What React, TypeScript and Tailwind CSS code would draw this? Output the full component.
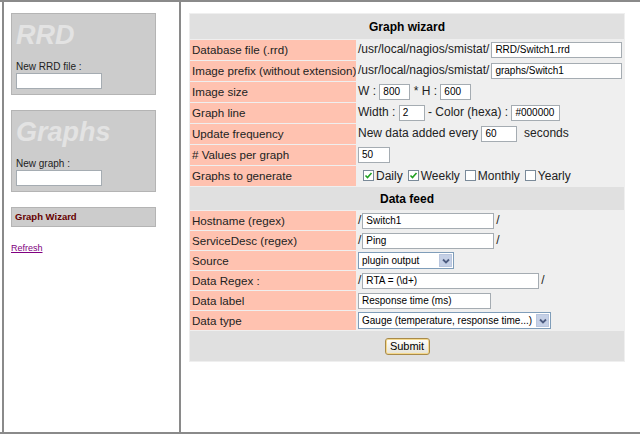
import React from "react";

const font = { fontFamily: '"Liberation Sans", Arial, sans-serif' };

function TextBox({ value = "", w, className = "" }: { value?: string; w: string; className?: string }) {
  return (
    <span
      className={`inline-flex h-[16px] items-center border border-[#a5acb2] bg-white px-[3px] align-middle text-[10px] leading-none text-black ${w} ${className}`}
    >
      {value}
    </span>
  );
}

function Select({ value, w }: { value: string; w: string }) {
  return (
    <span className={`inline-flex h-[17px] items-center border border-[#7f9db9] bg-white align-middle ${w}`}>
      <span className="flex-1 truncate pl-[3px] text-[10px] leading-none text-black">{value}</span>
      <span className="m-[1px] flex h-[13px] w-[13px] items-center justify-center border border-[#b9c6de] bg-[#c5d0e6]">
        <svg width="8" height="6" viewBox="0 0 8 6">
          <path d="M1 1.5 L4 4.5 L7 1.5" fill="none" stroke="#4d5c80" strokeWidth="1.8" />
        </svg>
      </span>
    </span>
  );
}

function Check({ checked, label }: { checked?: boolean; label: string }) {
  return (
    <span className="ml-[5px] inline-flex items-center">
      <span className="flex h-[11px] w-[11px] items-center justify-center border border-[#7a8a99] bg-white">
        {checked && (
          <svg width="9" height="9" viewBox="0 0 9 9">
            <path d="M1.5 4.5 L3.5 6.5 L7.5 2" fill="none" stroke="#21a121" strokeWidth="1.6" />
          </svg>
        )}
      </span>
      <span className="ml-[2px]">{label}</span>
    </span>
  );
}

function Row({ label, h = "h-[20px]", children }: { label: string; h?: string; children: React.ReactNode }) {
  return (
    <tr className={h}>
      <td className="overflow-hidden bg-[#ffc2b0] px-[2px] py-0 align-middle text-[11.6px] whitespace-nowrap">{label}</td>
      <td className="py-0 pl-[1px] pr-0 align-middle whitespace-nowrap">{children}</td>
    </tr>
  );
}

function SideBox({ title, label }: { title: string; label: string }) {
  return (
    <div className="h-[82px] w-[145px] border border-[#b4b4b4] bg-[#cccccc] pl-[4px]">
      <div className="mt-[5px] text-[27px] font-bold italic leading-[32px] text-[#e3e3e3]">{title}</div>
      <div className="mt-[10px] text-[10px] leading-[12px] text-[#222]">{label}</div>
      <div className="h-[16px] w-[86px] border border-[#a5acb2] bg-white" />
    </div>
  );
}

export default function App() {
  return (
    <div className="flex h-[435px] w-[640px] flex-col overflow-hidden bg-white text-black" style={font}>
      <div className="h-[2px] bg-[#8a8a8a]" />
      <div className="flex h-[430px]">
        <div className="ml-[2px] w-[177px] border-l-2 border-[#8a8a8a] pl-[7px] pt-[11px]">
          <SideBox title="RRD" label="New RRD file :" />
          <div className="mt-[15px]">
            <SideBox title="Graphs" label="New graph :" />
          </div>
          <div className="mt-[15px] flex h-[20px] w-[145px] items-center border border-[#b4b4b4] bg-[#cccccc] pl-[3px] text-[9.5px] font-bold text-[#660000]">
            Graph Wizard
          </div>
          <a className="mt-[15px] block text-[9px] text-[#800080] underline">Refresh</a>
        </div>
        <div className="w-[2px] bg-[#8a8a8a]" />
        <div className="flex-1 pl-[8px] pt-[11px]">
          <table className="w-[436px] table-fixed border-separate border-spacing-[1px] bg-[#efefef] text-[12px] leading-none text-[#222]">
            <colgroup>
              <col className="w-[166px]" />
              <col />
            </colgroup>
            <tbody>
              <tr className="h-[25px]">
                <th colSpan={2} className="bg-[#e0e0e0] text-center text-[12px] font-bold text-black">
                  Graph wizard
                </th>
              </tr>
              <Row label="Database file (.rrd)">
                /usr/local/nagios/smistat/<TextBox value="RRD/Switch1.rrd" w="w-[131px]" className="ml-[2px]" />
              </Row>
              <Row label="Image prefix (without extension)">
                /usr/local/nagios/smistat/<TextBox value="graphs/Switch1" w="w-[131px]" className="ml-[2px]" />
              </Row>
              <Row label="Image size">
                W : <TextBox value="800" w="w-[31px]" /> * H : <TextBox value="600" w="w-[31px]" />
              </Row>
              <Row label="Graph line">
                Width : <TextBox value="2" w="w-[26px]" /> - Color (hexa) : <TextBox value="#000000" w="w-[49px]" />
              </Row>
              <Row label="Update frequency">
                New data added every <TextBox value="60" w="w-[36px]" /> &nbsp;seconds
              </Row>
              <Row label="# Values per graph">
                <TextBox value="50" w="w-[32px]" />
              </Row>
              <Row label="Graphs to generate">
                <span className="inline-flex items-center">
                  <Check checked label="Daily" />
                  <Check checked label="Weekly" />
                  <Check label="Monthly" />
                  <Check label="Yearly" />
                </span>
              </Row>
              <tr className="h-[23px]">
                <th colSpan={2} className="bg-[#e0e0e0] text-center text-[12px] font-bold text-black">
                  Data feed
                </th>
              </tr>
              <Row label="Hostname (regex)" h="h-[19px]">
                /<TextBox value="Switch1" w="w-[132px]" className="ml-[1px] mr-[2px]" />/
              </Row>
              <Row label="ServiceDesc (regex)" h="h-[19px]">
                /<TextBox value="Ping" w="w-[132px]" className="ml-[1px] mr-[2px]" />/
              </Row>
              <Row label="Source" h="h-[19px]">
                <Select value="plugin output" w="w-[96px]" />
              </Row>
              <Row label="Data Regex :" h="h-[19px]">
                /<TextBox value="RTA = (\d+)" w="w-[177px]" className="ml-[1px] mr-[2px]" />/
              </Row>
              <Row label="Data label" h="h-[19px]">
                <TextBox value="Response time (ms)" w="w-[133px]" />
              </Row>
              <Row label="Data type" h="h-[19px]">
                <Select value="Gauge (temperature, response time...)" w="w-[193px]" />
              </Row>
              <tr className="h-[30px]">
                <td colSpan={2} className="bg-[#e0e0e0] text-center align-middle">
                  <span className="inline-flex h-[17px] w-[45px] items-center justify-center rounded-[3px] border border-[#a88a4a] bg-gradient-to-b from-white to-[#e6e3d6] text-[11px] text-black shadow-[inset_0_0_0_1px_#f5d98c]">
                    Submit
                  </span>
                </td>
              </tr>
            </tbody>
          </table>
        </div>
      </div>
      <div className="h-[2px] bg-[#8a8a8a]" />
    </div>
  );
}
